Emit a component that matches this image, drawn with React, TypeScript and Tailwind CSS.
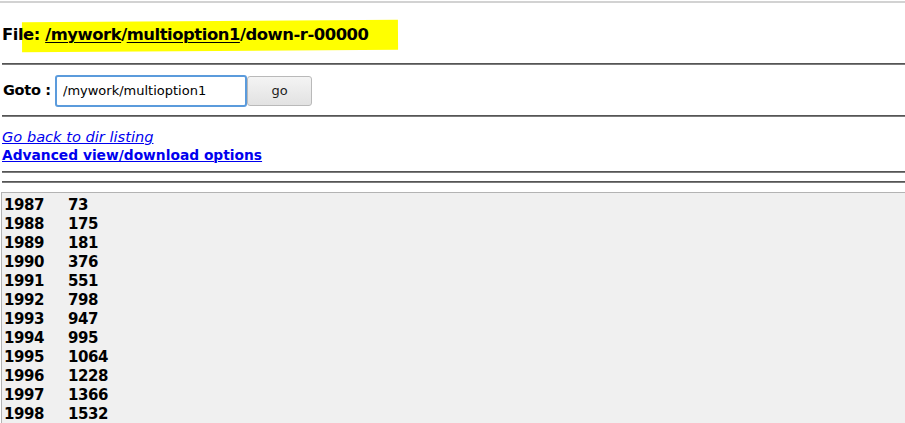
const rows: [string, string][] = [
  ['1987', '73'],
  ['1988', '175'],
  ['1989', '181'],
  ['1990', '376'],
  ['1991', '551'],
  ['1992', '798'],
  ['1993', '947'],
  ['1994', '995'],
  ['1995', '1064'],
  ['1996', '1228'],
  ['1997', '1366'],
  ['1998', '1532'],
];

const font = { fontFamily: '"DejaVu Sans", Verdana, sans-serif' };

const Rule = () => <div className="ml-[2px] h-[2px] border-t border-b border-t-[#555] border-b-[#7c7c7c]" />;

export default function App() {
  return (
    <div className="relative min-h-screen overflow-hidden bg-white text-black" style={font}>
      <div className="mt-[1px] h-[2px] bg-[#d2d2d2]" />

      {/* marker highlight drawn over the path */}
      <div className="absolute left-[22px] top-[21px] h-[30px] w-[376px] -rotate-[0.35deg] bg-[#ffff00]" />

      <h1 className="relative h-[60px] pl-[2px] pt-[22px] text-[16.4px] font-bold leading-[20px] tracking-[-0.45px]">
        File:{' '}
        <a href="#" className="underline decoration-1 underline-offset-2">/mywork</a>/
        <a href="#" className="underline decoration-1 underline-offset-2">multioption1</a>/down-r-00000
      </h1>

      <Rule />

      <div className="flex h-[50px] items-center pl-[3px] pt-[1px]">
        <span className="w-[52px] text-[14.5px] font-bold tracking-[-0.3px]">Goto :</span>
        <input
          defaultValue="/mywork/multioption1"
          className="h-[32px] w-[192px] rounded-[3px] border-2 border-[#5b9bdc] px-[6px] text-[13px] outline-none"
          style={font}
        />
        <button
          className="h-[30px] w-[65px] rounded-[3px] border border-[#b9b9b9] bg-gradient-to-b from-[#f4f4f4] to-[#e2e2e2] text-[13px] text-[#222]"
          style={font}
        >
          go
        </button>
      </div>

      <Rule />

      <div className="flex flex-col pb-[6px] pl-[2px] pt-[10px] text-[13.8px] leading-[19px] text-[#0000ee]">
        <a href="#" className="italic underline decoration-1 text-[14.6px]">Go back to dir listing</a>
        <a href="#" className="font-bold underline decoration-1">Advanced view/download options</a>
      </div>

      <Rule />
      <div className="h-[8px]" />
      <Rule />
      <div className="h-[9px]" />

      <div className="-mr-4 ml-[1px] border border-[#b3b3b3] bg-[#f0f0f0] pb-[40px] pl-[2px] pt-[3px] text-[15px] font-bold leading-[19px] tracking-[-0.4px]">
        {rows.map(([year, count]) => (
          <div key={year} className="flex">
            <span className="w-[64px]">{year}</span>
            <span>{count}</span>
          </div>
        ))}
      </div>
    </div>
  );
}
